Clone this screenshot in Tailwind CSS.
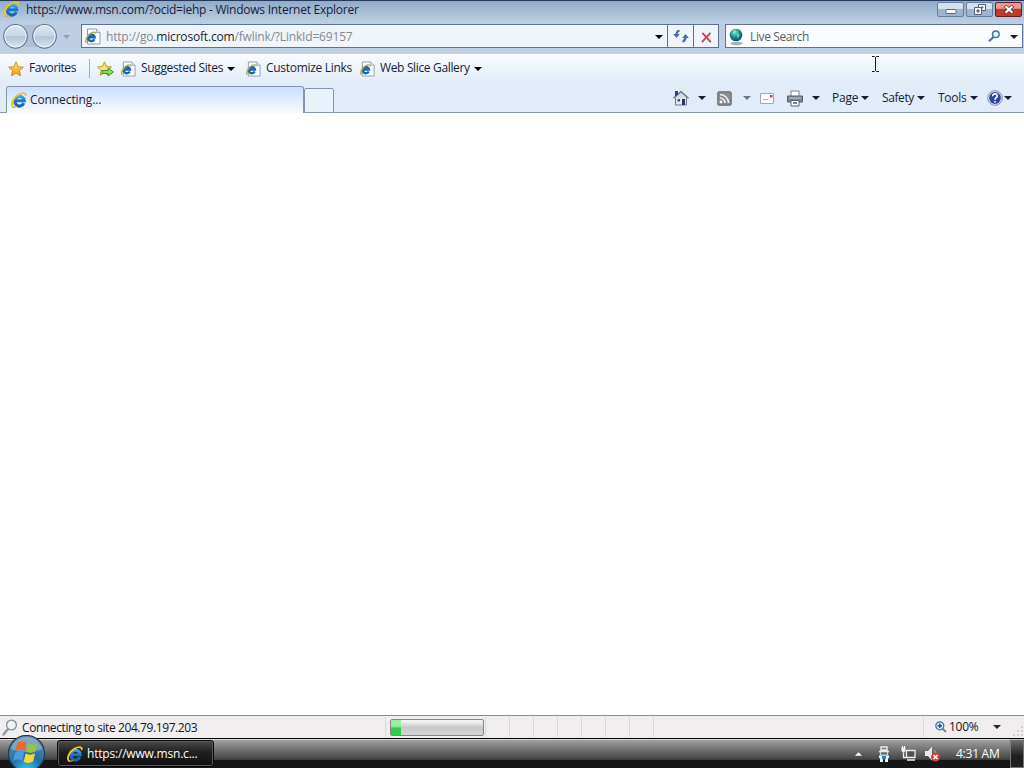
<!DOCTYPE html>
<html lang="en">
<head>
  <meta charset="UTF-8" />
  <meta name="viewport" content="width=device-width, initial-scale=1.0" />
  <title>https://www.msn.com/?ocid=iehp - Windows Internet Explorer</title>
  <script src="https://cdn.jsdelivr.net/npm/@tailwindcss/browser@4"></script>
</head>
<body class="relative flex h-[768px] w-[1024px] flex-col overflow-hidden bg-white font-['Open_Sans','Noto_Sans',sans-serif] text-[12px] leading-4 tracking-[-0.25px] whitespace-nowrap text-[#1b1b38]">

  <!-- shared icons -->
  <svg class="absolute h-0 w-0">
    <defs>
      <linearGradient id="blue" gradientUnits="userSpaceOnUse" x1="0" y1="2" x2="0" y2="15"><stop offset="0" stop-color="#4fb9f2" /><stop offset=".5" stop-color="#1b78cc" /><stop offset="1" stop-color="#1a5fb4" /></linearGradient>
      <linearGradient id="gold" x1="0" y1="0" x2="0" y2="1"><stop offset="0" stop-color="#ffe873" /><stop offset="1" stop-color="#f0921c" /></linearGradient>
      <radialGradient id="globe" cx=".4" cy=".3" r=".8"><stop offset="0" stop-color="#7fe0d8" /><stop offset=".5" stop-color="#178a80" /><stop offset="1" stop-color="#0b3f78" /></radialGradient>
      <radialGradient id="orb" cx=".5" cy="1" r=".9"><stop offset="0" stop-color="#3fd0f4" /><stop offset=".5" stop-color="#1f6fa6" /><stop offset="1" stop-color="#5c8aa8" /></radialGradient>
    </defs>
    <symbol id="ie" viewBox="0 0 16 16">
      <path d="M12.800 11.200A4.700 4.900 0 1 1 13.200 8.700H5" fill="none" stroke="url(#blue)" stroke-width="3.100" />
      <path d="M2.200 15C-1 12.500 2.500 5.500 7.500 2.700c3.500-2.100 7.300-2.300 7.300.600" fill="none" stroke="#eec22c" stroke-width="1.900" stroke-linecap="round" />
      <path d="M2 15c1.200.6 2.800 0 3.800-.7" fill="none" stroke="#d8a820" stroke-width="1.300" />
    </symbol>
    <symbol id="page" viewBox="0 0 16 16">
      <path d="M2.500.500h9l3.500 3.500v11.500H2.500z" fill="#fdfeff" stroke="#8c9cb0" />
      <path d="M11.500.500V4H15" fill="#dfe8f2" stroke="#8c9cb0" stroke-width=".8" />
      <path d="M9.300 10.700A3.300 3.300 0 1 1 9.600 8.700H4" fill="none" stroke="#1d62b4" stroke-width="2.500" />
      <path d="M1.300 14C-.3 12 2.200 7 5.700 4.800c2.500-1.600 5.300-1.600 5 .4" fill="none" stroke="#aeb03a" stroke-width="1.500" />
    </symbol>
    <symbol id="star" viewBox="0 0 16 16">
      <path d="M8 .8l2.100 4.900 5.300.500-4 3.500 1.200 5.300L8 12.200 3.400 15l1.200-5.300-4-3.500 5.300-.5z" fill="url(#gold)" stroke="#c98a1e" stroke-width=".9" stroke-linejoin="round" />
    </symbol>
    <symbol id="arrow" viewBox="0 0 8 4"><path d="M0 0h8L4 4z" fill="currentColor" /></symbol>
  </svg>

  <!-- title bar -->
  <header class="flex h-[22px] shrink-0 items-start border-t border-[#233a5c] bg-linear-to-b from-[#8fabc9] to-[#bccee4] pl-[3px]">
    <svg class="h-4 w-[17px]"><use href="#ie" /></svg>
    <h1 class="ml-1.5 w-[400px] text-[12px] leading-[17px] font-normal">https://www.msn.com/?ocid=iehp - Windows Internet Explorer</h1>
    <div class="mt-px mr-0.5 ml-auto flex gap-0.5">
      <div class="flex h-[15px] w-[27px] items-center justify-center rounded-[2px] border border-[#65809f] bg-linear-to-b from-[#d3e0ee] from-45% to-[#9db4cf] to-50%">
        <svg class="mt-1 h-[5px] w-3" viewBox="0 0 12 5"><rect x="1" y=".5" width="10" height="4" rx="1" fill="#fff" stroke="#596779" /></svg>
      </div>
      <div class="flex h-[15px] w-[27px] items-center justify-center rounded-[2px] border border-[#65809f] bg-linear-to-b from-[#d3e0ee] from-45% to-[#9db4cf] to-50%">
        <svg class="h-[11px] w-3" viewBox="0 0 12 11" fill="#f8fbff" stroke="#50627a"><path d="M4.500.500h7v6h-7zM7 3h2v1H7z" /><path d="M.500 3.500h7v7h-7z" /><path d="M3 6h2v2H3z" fill="#91a8c2" /></svg>
      </div>
      <div class="flex h-[15px] w-[27px] items-center justify-center rounded-[2px] border border-[#63202a] bg-linear-to-b from-[#e59a8c] from-40% to-[#c13b28] to-50%">
        <svg class="h-[9px] w-3" viewBox="0 0 12 9"><path d="M2 .8l8 7.400M10 .8L2 8.200" stroke="#663038" stroke-width="3.600" /><path d="M2.500 1.200l7 6.600M9.500 1.200l-7 6.600" stroke="#fff" stroke-width="2.200" /></svg>
      </div>
    </div>
  </header>

  <!-- navigation row -->
  <nav class="flex h-8 shrink-0 items-start bg-linear-to-b from-[#bccee4] to-[#c0d0e4] pt-0.5">
    <svg class="h-[26px] w-[72px]" viewBox="0 0 72 26">
      <defs><linearGradient id="ball" x1="0" y1="0" x2="0" y2="1"><stop offset="0" stop-color="#dfe9f3" /><stop offset=".48" stop-color="#c6d4e3" /><stop offset=".52" stop-color="#b3c4d5" /><stop offset="1" stop-color="#dbe7f2" /></linearGradient></defs>
      <path d="M16 1h28v22H16z" fill="#a9bbd0" opacity=".7" />
      <g fill="url(#ball)" stroke="#61758e" stroke-width="1.100"><circle cx="15.500" cy="12.300" r="11.800" /><circle cx="44.500" cy="12.300" r="11.800" /></g>
      <g fill="none" stroke="#f2f7fc" stroke-width=".9"><circle cx="15.500" cy="12.300" r="10.700" /><circle cx="44.500" cy="12.300" r="10.700" /></g>
      <path d="M63 11h7l-3.500 4z" fill="#8ba0bb" />
    </svg>
    <div class="ml-[9px] flex h-6 w-[638px] border border-[#5d7190] bg-[#f0f5fb]">
      <svg class="mt-[3px] ml-[3px] h-[17px] w-4"><use href="#page" /></svg>
      <span class="ml-[5px] w-[540px] leading-[23px] tracking-[-0.18px] text-[#84898f]">http://go.<span class="text-[#20242e]">microsoft.com</span>/fwlink/?LinkId=69157</span>
      <svg class="mt-2.5 ml-[9px] h-1 w-2 text-black"><use href="#arrow" /></svg>
      <div class="ml-auto flex w-[26px] items-center justify-center border-l border-[#5d7190]">
        <svg class="h-4 w-4" viewBox="0 0 16 16"><path d="M6.500 2.500C4 3 3.500 4.500 3.500 7M9.500 13.500c2.500-.5 3-2 3-4.500" fill="none" stroke="#3b6eb4" stroke-width="2.200" /><path d="M.200 6h6.600L3.500 10zM9.200 10h6.600l-3.300-4z" fill="#3b6eb4" /></svg>
      </div>
      <div class="flex w-[25px] items-center justify-center border-l border-[#5d7190]">
        <svg class="mt-0.5 h-[11px] w-[11px]" viewBox="0 0 12 12"><path d="M1.500 1l9.200 10M10.300 1L1 11" stroke="#c94352" stroke-width="2.100" /></svg>
      </div>
    </div>
    <div class="ml-1.5 flex h-6 w-[298px] border border-[#5d7190] bg-[#fafcfe]">
      <svg class="mt-[3px] ml-0.5 h-[18px] w-4" viewBox="0 0 16 18"><ellipse cx="8.500" cy="15.500" rx="6" ry="1.700" fill="#aab0b8" /><circle cx="8" cy="7" r="6.300" fill="url(#globe)" /><path d="M5 3c2-2 4-1 3 1s-3 1-3 3M9 6c2-1 3 1 2 3s-2 1-2-1z" fill="#9fe8c8" opacity=".6" /></svg>
      <span class="ml-1.5 leading-[24px] tracking-[-0.38px] text-[#5a5f66]">Live Search</span>
      <svg class="mt-[5px] ml-auto h-3 w-3" viewBox="0 0 12 12"><path d="M1 11.200L5.500 7" stroke="#526f9a" stroke-width="2.100" /><circle cx="7.800" cy="4.200" r="3.300" fill="#e9f4fd" stroke="#3f6fb4" stroke-width="1.500" /></svg>
      <svg class="mt-2.5 mr-1 ml-2.5 h-1 w-2 text-[#1b1b28]"><use href="#arrow" /></svg>
    </div>
  </nav>

  <!-- favorites bar and tabs share one gradient -->
  <div class="flex h-[59px] shrink-0 flex-col border-t border-white bg-linear-to-b from-[#f8fbff] to-[#e1ecf8] to-50%">
    <div class="flex h-[27px] items-center pl-2">
      <svg class="h-4 w-4"><use href="#star" /></svg>
      <span class="mb-px ml-[5px] w-[60px] tracking-[-0.42px]">Favorites</span>
      <i class="h-[19px] w-px bg-[#a3afbf]"></i>
      <svg class="ml-[7px] h-4 w-[17px]" viewBox="0 0 17 16"><path d="M7.500.8l2 4.700 5 .500-3.800 3.300 1.100 5-4.300-2.600-4.400 2.600 1.200-5L.500 6l5-.5z" fill="#fbe56b" stroke="#b3a222" /><path d="M5 9.500h6V7l5.500 4-5.500 4v-2.500H5z" fill="#8fe04c" stroke="#38832a" stroke-width=".9" /></svg>
      <svg class="ml-[7px] h-4 w-[15px]"><use href="#page" /></svg>
      <span class="mb-px ml-[5px] w-[86px] tracking-[-0.35px]">Suggested Sites</span>
      <svg class="h-1 w-2 text-black"><use href="#arrow" /></svg>
      <svg class="ml-[11px] h-4 w-[15px]"><use href="#page" /></svg>
      <span class="mb-px ml-[5px] w-[94px] tracking-[-0.3px]">Customize Links</span>
      <svg class="h-4 w-[15px]"><use href="#page" /></svg>
      <span class="mb-px ml-[5px] w-[94px] tracking-[-0.35px]">Web Slice Gallery</span>
      <svg class="h-1 w-2 text-black"><use href="#arrow" /></svg>
    </div>
    <div class="flex grow items-end">
      <i class="h-px w-1.5 bg-[#8494ad]"></i>
      <div class="flex h-[27px] w-[298px] items-center rounded-t-[3px] border border-b-0 border-[#8494ad] bg-linear-to-b from-[#ccdffd] to-[#f8fbff] pl-1">
        <svg class="h-4 w-4"><use href="#ie" /></svg>
        <span class="ml-[3px] tracking-[-0.1px]">Connecting...</span>
      </div>
      <div class="h-[25px] w-[30px] rounded-t-[2px] border border-[#8494ad] bg-[#e9f1fa]"></div>
      <!-- command bar -->
      <div class="flex h-[29px] grow items-center border-b border-[#8494ad]">
        <svg class="ml-[339px] h-4 w-4" viewBox="0 0 16 16"><path d="M2.500 7.500h11V15h-11z" fill="#e4e9f1" stroke="#707987" /><path d="M1 8L8 1.500 15 8z" fill="#d5dbe6" /><path d="M.500 8.200L8 1.500l7.500 6.700" fill="none" stroke="#606a7a" stroke-width="1.300" /><path d="M2 1h3v3.500L2 7z" fill="#303fae" /><path d="M9 9h3v6H9z" fill="#23345c" /><path d="M4.500 9h2.500v2.500H4.500z" fill="#4b5060" /></svg>
        <svg class="ml-[9px] h-1 w-2"><use href="#arrow" /></svg>
        <svg class="mt-px ml-[11px] h-[15px] w-[15px]" viewBox="0 0 15 15"><rect x=".8" y=".8" width="13.400" height="13.400" rx="1.500" fill="#8b8c8d" stroke="#6f7072" stroke-width="1.200" /><path d="M3 3.500a8.500 8.500 0 0 1 8.500 8.500M3 7a5 5 0 0 1 5 5" fill="none" stroke="#f5f5f5" stroke-width="1.600" /><circle cx="4" cy="11" r="1.400" fill="#fff" /></svg>
        <svg class="ml-[11px] h-1 w-2 text-[#697789]"><use href="#arrow" /></svg>
        <svg class="ml-[9px] h-[11px] w-3.5" viewBox="0 0 14 11"><path d="M.500.500h13v10H.500z" fill="#fdfdfd" stroke="#a3a8b2" /><path d="M10 2h2.500v2.500H10z" fill="#c94355" /><path d="M3 6.500h5" stroke="#c2a7b4" /></svg>
        <svg class="ml-[13px] h-[17px] w-4" viewBox="0 0 16 17"><path d="M4 1h8v6H4z" fill="#fff" stroke="#7b828b" /><path d="M.500 6h15v6H.500z" fill="#7e858c" stroke="#596069" /><path d="M2 8h12" stroke="#c6cdd2" /><path d="M4 10.500h8V16H4z" fill="#fff" stroke="#596069" /><path d="M6 13h4" stroke="#364c68" stroke-width="1.400" /></svg>
        <svg class="ml-[9px] h-1 w-2"><use href="#arrow" /></svg>
        <span class="ml-3 w-[29px]">Page</span>
        <svg class="h-1 w-2"><use href="#arrow" /></svg>
        <span class="ml-[13px] w-[35px] tracking-[-0.4px]">Safety</span>
        <svg class="h-1 w-2"><use href="#arrow" /></svg>
        <span class="ml-[13px] w-8">Tools</span>
        <svg class="h-1 w-2"><use href="#arrow" /></svg>
        <svg class="ml-[9px] h-4 w-4" viewBox="0 0 16 16"><circle cx="8" cy="8" r="7.300" fill="#e2e8f5" stroke="#858da6" /><circle cx="8" cy="8" r="5.900" fill="#2c4aa0" /><path d="M5.700 6.200c0-3.200 4.800-2.900 4.600-.1C10.200 7.700 8 7.800 8 9.700M8 10.900v1.700" fill="none" stroke="#fff" stroke-width="1.600" /></svg>
        <svg class="ml-px h-1 w-2"><use href="#arrow" /></svg>
      </div>
    </div>
  </div>

  <main class="grow bg-white"></main>

  <!-- status bar -->
  <footer class="flex h-[23px] shrink-0 items-center border-t border-[#8d8d8d] bg-[#f0eeee] text-[#15151c]">
    <svg class="ml-0.5 h-[17px] w-4" viewBox="0 0 16 17"><path d="M1.500 15.500l4-5" stroke="#969ca2" stroke-width="2.500" stroke-linecap="round" /><circle cx="9.500" cy="6" r="4.900" fill="#edf4f8" stroke="#858d95" stroke-width="1.300" /><path d="M7 6c0-2 1-3 3-3" fill="none" stroke="#fff" /></svg>
    <span class="mt-0.5 ml-1 w-[363px] tracking-[-0.41px]">Connecting to site 204.79.197.203</span>
    <i class="h-5 w-px bg-[#dad8d8]"></i>
    <div class="ml-1 h-[17px] w-[94px] rounded-[2px] border border-[#858585] bg-linear-to-b from-[#f2f2f2] from-10% via-[#c9c9c9] via-50% to-[#d4d4d4]">
      <div class="h-full w-2.5 bg-linear-to-b from-[#9aeda4] from-40% to-[#32cb4b] to-55%"></div>
    </div>
    <div class="ml-px flex gap-[23px]">
      <i class="h-5 w-px bg-[#dad8d8]"></i>
      <i class="h-5 w-px bg-[#dad8d8]"></i>
      <i class="h-5 w-px bg-[#dad8d8]"></i>
      <i class="h-5 w-px bg-[#dad8d8]"></i>
      <i class="h-5 w-px bg-[#dad8d8]"></i>
      <i class="h-5 w-px bg-[#dad8d8]"></i>
      <i class="h-5 w-px bg-[#dad8d8]"></i>
      <i class="h-5 w-px bg-[#dad8d8]"></i>
    </div>
    <i class="ml-auto h-5 w-px bg-[#dad8d8]"></i>
    <svg class="ml-[11px] h-3 w-3" viewBox="0 0 12 12"><path d="M7 7l4 4" stroke="#8c8172" stroke-width="2" /><circle cx="4.800" cy="4.800" r="4" fill="#d8ebfb" stroke="#3a72b8" stroke-width="1.200" /><path d="M2.500 4.800h4.600M4.800 2.500v4.600" stroke="#1d4f9c" stroke-width="1.500" /></svg>
    <span class="ml-0.5 w-11">100%</span>
    <svg class="h-1 w-2 text-[#26262c]"><use href="#arrow" /></svg>
    <svg class="mt-2 ml-3 h-[11px] w-[11px]" viewBox="0 0 11 11" fill="#cfcdcd"><path d="M8 0h2v2H8zM4 4h2v2H4zM8 4h2v2H8zM0 8h2v2H0zM4 8h2v2H4zM8 8h2v2H8z" /></svg>
  </footer>

  <!-- taskbar -->
  <div class="flex h-[30px] shrink-0 items-start border-t border-black bg-linear-to-b from-[#a6a6a6] from-0% via-[#454545] via-70% to-[#171717] to-74% text-white shadow-[inset_0_1px_0_#d8d8d8]">
    <svg class="-mt-1 ml-[7px] h-[38px] w-[38px] shrink-0" viewBox="0 0 38 38">
      <circle cx="19.500" cy="18.500" r="18" fill="url(#orb)" stroke="#1b3b58" stroke-width="1.200" />
      <path d="M4 14a16 16 0 0 1 31 0c-7 4-24 4-31 0z" fill="#d6e7ef" opacity=".35" />
      <g transform="translate(-4 -5.500) scale(1.230)">
        <path d="M11.500 11c2.500-1.800 5-1.700 7.500-.2l-1.500 6.700c-2.400-1.400-5-1.400-7.500.2z" fill="#ed6632" />
        <path d="M20.200 11.500c2.500 1.300 5 1.300 7.800-.2l-1.600 6.600c-2.600 1.500-5.200 1.500-7.700.2z" fill="#92c83e" />
        <path d="M9.700 19c2.500-1.600 5-1.600 7.500-.2l-1.600 6.700c-2.400-1.400-4.900-1.400-7.400.2z" fill="#4b9be2" />
        <path d="M18.400 19.500c2.500 1.300 5.100 1.300 7.700-.2l-1.600 6.700c-2.600 1.500-5.200 1.500-7.700.2z" fill="#ffd33b" />
      </g>
    </svg>
    <div class="mt-px ml-3 flex h-[27px] w-[157px] items-center rounded-[3px] border border-[#0a0a0a] bg-linear-to-b from-[#4b4b4b] via-[#202020] via-45% to-[#101010] pl-[9px] shadow-[inset_0_0_0_1px_#5a5a5a]">
      <svg class="h-4 w-4"><use href="#ie" /></svg>
      <span class="mt-px ml-1 tracking-[-0.2px]">https://www.msn.c...</span>
    </div>
    <div class="ml-auto flex h-[29px] items-center">
      <svg class="h-1 w-[7px]" viewBox="0 0 8 4"><path d="M0 4l4-4 4 4z" fill="#fff" /></svg>
      <svg class="ml-4 h-4 w-3" viewBox="0 0 12 16"><path d="M3 1h6v3H3zM1 5.500h10" fill="none" stroke="#e6edf3" stroke-width="1.400" /><path d="M2.500 6v3h7V6" fill="none" stroke="#cfd9e0" stroke-width="1.200" /><path d="M1 9.500h10V12H1zM2 12h3v4H2zM7 12h3v4H7z" fill="#e8f4fc" /><path d="M4 10h4v3H4z" fill="#2883c6" /></svg>
      <svg class="ml-[11px] h-[15px] w-[15px]" viewBox="0 0 15 15"><path d="M5.500 4.500h8.500v7H5.500z" fill="#4a5157" stroke="#eee" stroke-width="1.300" /><path d="M6 14h8M2.500 7v4.500H5" fill="none" stroke="#eee" stroke-width="1.300" /><path d="M.500 1.500h4V5L2.500 7 .500 5z" fill="#eee" /><path d="M1.500 0v2M3.500 0v2" stroke="#fff" /></svg>
      <svg class="ml-[9px] h-4 w-[15px]" viewBox="0 0 15 16"><path d="M0 5h3l4-4.500v14L3 10H0z" fill="#e9e9e9" /><path d="M9 4c1 1 1.500 2 1.500 3" fill="none" stroke="#bbb" /><circle cx="10.500" cy="11" r="4.500" fill="#d83f35" /><path d="M8.500 9l4 4M12.500 9l-4 4" stroke="#fff" stroke-width="1.500" /></svg>
      <span class="mt-px ml-4 w-[54px]">4:31 AM</span>
      <div class="h-[29px] w-3.5 border border-[#777] border-t-[#bbb] bg-linear-to-b from-[#707070] to-[#202020] to-60%"></div>
    </div>
  </div>

  <!-- text cursor -->
  <svg class="absolute top-[56px] left-[871px] h-4 w-[9px]" viewBox="0 0 9 16"><path d="M1 .500h2.500l1 1 1-1H8M4.500 1v14M1 15.500h2.500l1-1 1 1H8" fill="none" stroke="#111827" /></svg>
</body>
</html>
